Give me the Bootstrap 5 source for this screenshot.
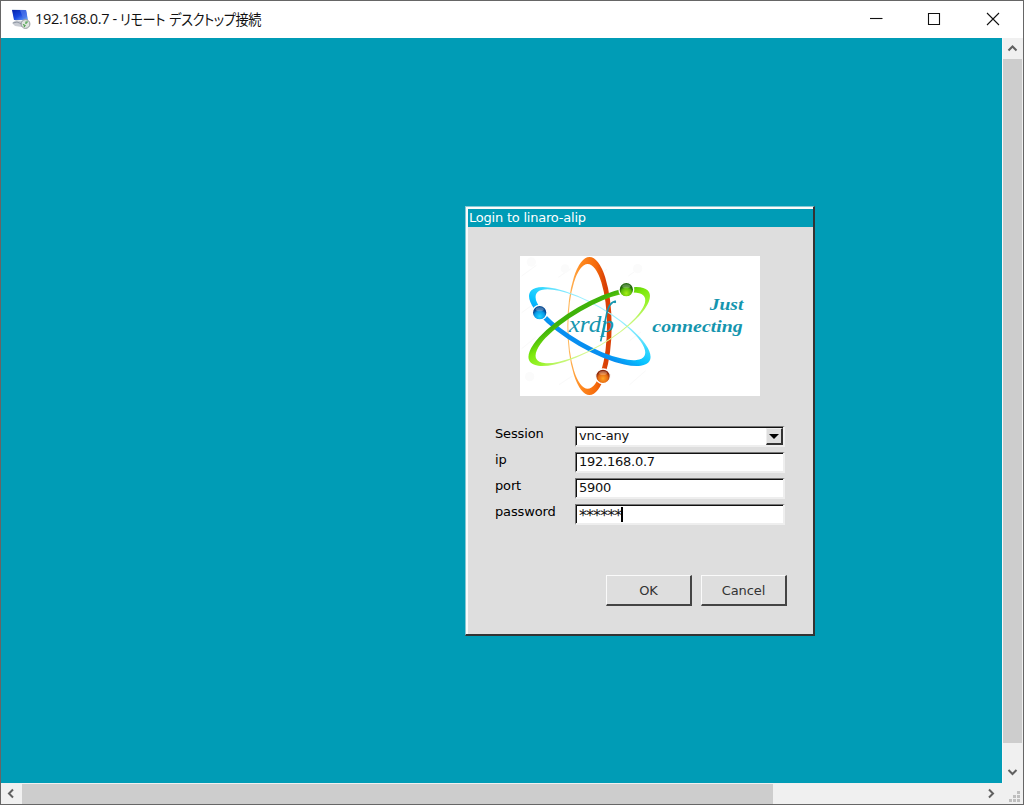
<!DOCTYPE html>
<html lang="ja">
<head>
<meta charset="utf-8">
<meta name="viewport" content="width=device-width, initial-scale=1">
<title>192.168.0.7 - リモート デスクトップ接続</title>
<link href="https://cdn.jsdelivr.net/npm/bootstrap@5.3.0/dist/css/bootstrap.min.css" rel="stylesheet">
<style>
html, body { height: 100%; overflow: hidden; }
.win { height: 100vh; border: 1px solid #666; background: #fff; }
.win-title { height: 37px; padding-left: 10px; color: #111; font: 14.5px/35px "Open Sans", "Noto Sans CJK JP", sans-serif; }
.win-title .addr { letter-spacing: -.33px; margin-left: 4px; white-space: pre; }
.win-title .jp { font-family: "Noto Sans CJK JP", sans-serif; font-feature-settings: "palt"; white-space: pre; letter-spacing: -.45px; word-spacing: 2px; transform: scaleX(.91); transform-origin: left; font-size: 14.5px; }
.desk { background: #009cb6; }
.vbar { width: 21px; background: #f0f0f0; border-left: 1px solid #f8f8f8; }
.vbar .thumb { width: 19px; height: 684px; background: #cdcdcd; }
.hbar { height: 21px; background: #f0f0f0; padding-top: 1px; }
.hbar .thumb { width: 751px; background: #cdcdcd; }
.login { width: 350px; height: 430px; margin: 168px 0 0 464px; background: #dedede; color: #000; border: 1px solid #85c8d5; border-right: 2px solid #333; border-bottom: 2px solid #333; box-shadow: inset 2px 2px #fafafa; padding: 2px 0 0 2px; font: 13px/20px "DejaVu Sans", sans-serif; }
.login-bar { height: 18px; background: #009cb6; color: #fff; line-height: 18px; padding-left: 1px; letter-spacing: -.22px; }
.logo { display: block; margin: 29px 0 0 52px; }
.fields { margin: 30px 0 0 27px; width: 290px; gap: 5px; }
.fields label { width: 80px; height: 21px; line-height: 15px; letter-spacing: -.15px; }
.sunken { width: 210px; height: 21px; background: #fff; border: 1px solid #777; border-right: 2px solid #eee; border-bottom: 2px solid #eee; box-shadow: inset 1px 1px #111; color: #111; line-height: 16px; padding: 1px 0 0 3px; letter-spacing: -.25px; }
.drop { width: 17px; height: 17px; background: #dedede; border: 1px solid #eee; border-right: 2px solid #333; border-bottom: 2px solid #333; }
.caret { width: 2px; height: 15px; background: #000; margin-top: 1px; }
.stars { width: 42px; font-size: 16px; line-height: 20px; letter-spacing: -.95px; }
.push { width: 86px; height: 31px; background: #dedede; border: 1px solid #fafafa; border-right: 2px solid #444; border-bottom: 2px solid #444; color: #333; padding: 0; font: inherit; line-height: 29px; letter-spacing: -.1px; }
.actions { margin: 50px 26px 0 0; gap: 9px; }
</style>
</head>
<body>
<div class="win d-flex flex-column">
  <header class="win-title d-flex align-items-start flex-shrink-0">
    <svg class="mt-2" width="20" height="20" viewBox="0 0 20 20">
      <defs><linearGradient id="scr" x1="0" y1="0" x2="1" y2="1"><stop offset="0" stop-color="#0623a9"/><stop offset=".5" stop-color="#1747df"/><stop offset="1" stop-color="#79aef5"/></linearGradient></defs>
      <path d="M1 0 15 1 17 12 3 11Z" fill="#d9e0ea"/><path d="M1 1 15 1 17 11 3 11Z" fill="url(#scr)"/><path d="M9 1 15 1 16 7 12 9Z" fill="#527be9" opacity=".7"/>
      <path d="M1 14 5 11 13 13 11 18 4 17Z" fill="#c8ccd3"/><path d="M2 14 6 13 11 15" stroke="#8d95a2" fill="none"/>
      <circle cx="14.5" cy="15" r="4.4" fill="#dfe4df" stroke="#92979b"/><path d="m12 15.500 2 1-1 1.500m4-5-2 0 0 2" fill="none" stroke="#49a048" stroke-width="1.2"/>
    </svg>
    <span class="addr">192.168.0.7 - </span><span class="jp">リモート デスクトップ接続</span>
    <svg class="ms-auto" width="153" height="37" viewBox="870 1 153 37" fill="none" stroke="#111" stroke-width="1.1">
      <path d="M870 18.5H882.5"/><path d="M928.5 13.5h11v11h-11z"/><path d="m987 13 12 12m0-12-12 12"/>
    </svg>
  </header>
  <div class="d-flex flex-grow-1">
    <main class="desk flex-grow-1">
      <section class="login">
        <div class="login-bar">Login to linaro-alip</div>
        <svg class="logo" width="240" height="140" viewBox="15 18 720 420">
          <defs>
            <linearGradient id="or"><stop offset="0" stop-color="#ffbd62"/><stop offset=".3" stop-color="#ff8a20"/><stop offset=".65" stop-color="#f56a0b"/><stop offset=".85" stop-color="#d94006"/></linearGradient>
            <linearGradient id="bl"><stop offset="0" stop-color="#a8f2ff"/><stop offset=".3" stop-color="#35d8ff"/><stop offset=".6" stop-color="#08c3ff"/><stop offset=".9" stop-color="#078ef0"/></linearGradient>
            <linearGradient id="gr"><stop offset="0" stop-color="#dcf89b"/><stop offset=".3" stop-color="#9cf430"/><stop offset=".6" stop-color="#7be80b"/><stop offset=".9" stop-color="#3fb209"/></linearGradient>
            <radialGradient id="bo" cy=".65"><stop offset="0" stop-color="#ffa526"/><stop offset=".65" stop-color="#e66b12"/><stop offset="1" stop-color="#8c2708"/></radialGradient>
            <radialGradient id="bb" cy=".75"><stop offset="0" stop-color="#20d5ff"/><stop offset=".7" stop-color="#0799e6"/><stop offset="1" stop-color="#064a93"/></radialGradient>
            <radialGradient id="bg" cy=".75"><stop offset="0" stop-color="#a5ef16"/><stop offset=".7" stop-color="#5dbd0a"/><stop offset="1" stop-color="#23680a"/></radialGradient>
            <path id="orbit" fill-rule="evenodd" d="M157 228a66.5 207 0 1 0 133 0a66.5 207 0 1 0-133 0M160 229a58 187 0 1 1 116 0a58 187 0 1 1-116 0"/>
          </defs>
          <path fill="#fff" d="M15 18h720v420H15z"/>
          <g stroke="#f9f9f9" stroke-width="3"><path d="m20 78 44-32m66 36 38-26m80 20 28-18m64 20 34-24M20 188l42-30m72 100 38-24M20 296l42-34m70 142 40-26m172 26 48-42m-48-90 34-26"/></g>
          <g fill="#fbfbfb"><circle cx="49" cy="36" r="14"/><circle cx="150" cy="56" r="13"/><circle cx="368" cy="56" r="14"/><circle cx="44" cy="380" r="14"/></g>
          <use href="#orbit" fill="url(#or)"/>
          <use href="#orbit" fill="url(#bl)" transform="rotate(120 223.5 229)"/>
          <use href="#orbit" fill="url(#gr)" transform="rotate(-120 223.5 229)"/>
          <g stroke="#fff" stroke-width="4"><circle cx="334" cy="119" r="22" fill="url(#bg)"/><circle cx="74" cy="188" r="22" fill="url(#bb)"/><circle cx="264" cy="379" r="22" fill="url(#bo)"/></g>
          <g fill="#fff" opacity=".25"><ellipse cx="334" cy="109" rx="12" ry="6"/><ellipse cx="74" cy="178" rx="12" ry="6"/><ellipse cx="264" cy="369" rx="12" ry="6"/></g>
          <g fill="#1595ae" font-family="Liberation Serif, serif" font-style="italic">
            <text x="161" y="247" font-size="68" textLength="136" lengthAdjust="spacingAndGlyphs">xrdp</text>
            <path d="M257 274 274 196Q282 154 303 154" fill="none" stroke="#1595ae" stroke-width="5"/><circle cx="300" cy="156" r="3.5"/>
            <g font-weight="bold" font-size="49"><text x="584" y="180" textLength="101" lengthAdjust="spacingAndGlyphs">Just</text><text x="412" y="246" textLength="271" lengthAdjust="spacingAndGlyphs">connecting</text></g>
          </g>
        </svg>
        <div class="fields d-flex flex-column">
          <div class="d-flex"><label>Session</label><div class="sunken d-flex justify-content-between"><span>vnc-any</span><span class="drop d-flex"><svg width="14" height="14" viewBox="0 0 14 14"><path d="M2 5h10L7 10z"/></svg></span></div></div>
          <div class="d-flex"><label>ip</label><div class="sunken">192.168.0.7</div></div>
          <div class="d-flex"><label>port</label><div class="sunken">5900</div></div>
          <div class="d-flex"><label>password</label><div class="sunken d-flex"><span class="stars">******</span><span class="caret"></span></div></div>
        </div>
        <div class="actions d-flex justify-content-end"><button class="push">OK</button><button class="push">Cancel</button></div>
      </section>
    </main>
    <aside class="vbar d-flex flex-column justify-content-between">
      <div><svg class="d-block" width="20" height="21" viewBox="0 0 20 21"><path d="m5.5 12.5 4-4 4 4" fill="none" stroke="#606060" stroke-width="2"/></svg><div class="thumb"></div></div>
      <svg width="20" height="21" viewBox="0 0 20 21"><path d="m5.5 8 4 4 4-4" fill="none" stroke="#606060" stroke-width="2"/></svg>
    </aside>
  </div>
  <footer class="hbar d-flex flex-shrink-0">
    <svg width="21" height="20" viewBox="0 0 21 20"><path d="m12 5.500-4 4 4 4" fill="none" stroke="#606060" stroke-width="2"/></svg>
    <div class="thumb"></div>
    <svg class="ms-auto" width="42" height="20" viewBox="0 0 42 20"><path d="m8 5.500 4 4-4 4" fill="none" stroke="#606060" stroke-width="2"/><path fill="#bfbfbf" d="M36 7h3v3h-3zM32 11h3v3h-3zM36 11h3v3h-3zM28 15h3v3h-3zM32 15h3v3h-3zM36 15h3v3h-3z"/></svg>
  </footer>
</div>
<script src="https://cdn.jsdelivr.net/npm/bootstrap@5.3.0/dist/js/bootstrap.bundle.min.js"></script>
</body>
</html>
